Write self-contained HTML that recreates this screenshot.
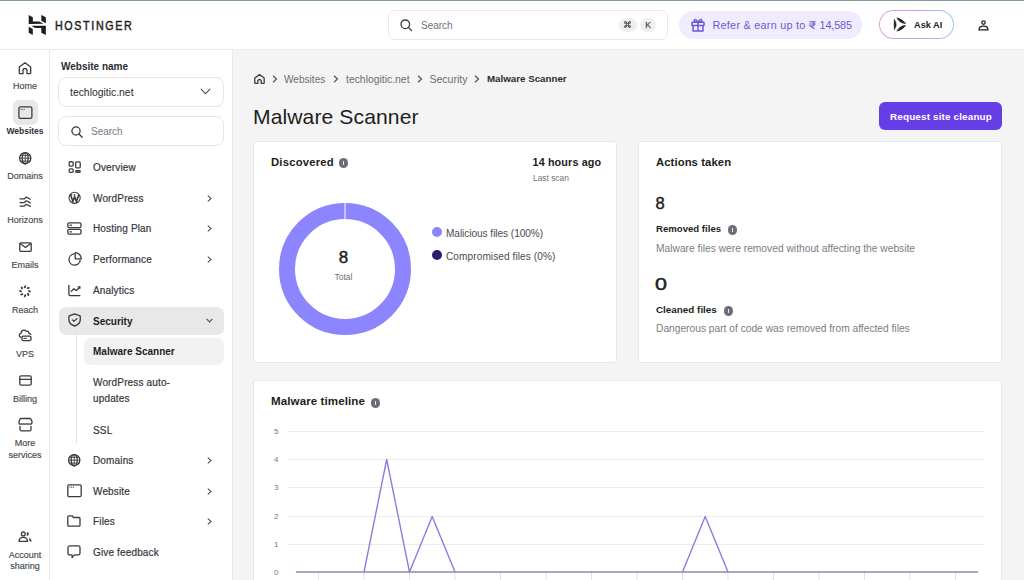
<!DOCTYPE html>
<html><head><meta charset="utf-8">
<style>
*{box-sizing:border-box;margin:0;padding:0}
html,body{width:1024px;height:580px;overflow:hidden;background:#fff}
body{position:relative;font-family:"Liberation Sans",sans-serif;color:#1d1e20}
.a{position:absolute;white-space:nowrap}
svg{position:absolute;overflow:visible}
.topline{left:0;top:0;width:1024px;height:1px;background:#839d9b}
.hdrb{left:0;top:49px;width:1024px;height:1px;background:#ebebeb}
.nav{left:0;top:50px;width:50px;height:530px;background:#fff;border-right:1px solid #e9e9e9}
.side{left:51px;top:50px;width:182px;height:530px;background:#fff;border-right:1px solid #e9e9e9}
.main{left:233px;top:50px;width:791px;height:530px;background:#f4f4f4}
.navl{font-size:9px;color:#46474c;text-align:center;width:50px;left:0;-webkit-text-stroke:0.15px #46474c}
.card{background:#fff;border:1px solid #e8e8e8;border-radius:3px}
.mi{font-size:10px;color:#36373d;left:93px;-webkit-text-stroke:0.2px #36373d;letter-spacing:0.15px}
.chev{stroke:#555;stroke-width:1.2;fill:none}
.ic{stroke:#3a3b40;stroke-width:1.3;fill:none;stroke-linecap:round;stroke-linejoin:round}
.info{width:9.4px;height:9.4px;border-radius:50%;background:#6e6e7b;margin-top:0.4px}
.info:after{content:"";position:absolute;left:4.15px;top:4px;width:1.1px;height:3px;background:#e8e8ee}
.info:before{content:"";position:absolute;left:4.15px;top:2.3px;width:1.1px;height:1.1px;background:#e8e8ee}
</style></head><body>
<div class="a topline"></div>

<!-- header -->
<svg style="left:26px;top:13px" width="22" height="24" viewBox="0 0 22 24"><g fill="#1d1e20">
<path d="M2.69 2.07 L6.82 4.14 V8.6 H13.4 L17.6 10.8 L2.69 10.9 Z"/>
<path d="M15.3 2.07 L19.85 4.34 V10.13 L15.3 7.86 Z"/>
<path d="M5.2 12.75 H19.85 V21.92 L15.3 19.64 V15 H9.2 Z"/>
<path d="M2.69 13.85 L6.82 15.92 V21.92 L2.69 19.64 Z"/>
</g></svg>
<div class="a" style="left:54.5px;top:19px;font-size:12.2px;font-weight:400;-webkit-text-stroke:0.45px #1d1e20;letter-spacing:1.85px;color:#1d1e20;transform:scaleX(0.88);transform-origin:0 0">HOSTINGER</div>
<div class="a hdrb"></div>

<div class="a" style="left:388px;top:10px;width:280px;height:30px;border:1px solid #e9e9e9;border-radius:7px;background:#fff"></div>
<svg style="left:400px;top:19px" width="13" height="13" viewBox="0 0 13 13"><circle cx="5.3" cy="5.3" r="4.3" class="ic" stroke="#3d3d3d" stroke-width="1.4"/><path d="M8.5 8.5 L11.6 11.6" class="ic" stroke-width="1.4"/></svg>
<div class="a" style="left:421px;top:20px;font-size:10px;color:#6f7076">Search</div>
<div class="a" style="left:619px;top:18px;width:18px;height:14px;border-radius:7px;background:#efefef"></div>
<svg style="left:624.3px;top:21px" width="7" height="7" viewBox="0 0 8 8"><g fill="none" stroke="#505050" stroke-width="1.15"><path d="M2.7 2.7 H5.3 V5.3 H2.7 Z"/><path d="M2.7 2.7 V1.7 A1.05 1.05 0 1 0 1.7 2.7 H2.7 M5.3 2.7 V1.7 A1.05 1.05 0 1 1 6.3 2.7 H5.3 M2.7 5.3 V6.3 A1.05 1.05 0 1 1 1.7 5.3 H2.7 M5.3 5.3 V6.3 A1.05 1.05 0 1 0 6.3 5.3 H5.3"/></g></svg>
<div class="a" style="left:640px;top:18px;width:16px;height:14px;border-radius:7px;background:#efefef;font-size:8.5px;color:#4a4a4a;-webkit-text-stroke:0.25px #4a4a4a;text-align:center;line-height:14px">K</div>

<div class="a" style="left:679px;top:11px;width:183px;height:28px;border-radius:14px;background:#efecfd"></div>
<svg style="left:691px;top:18px" width="14" height="14" viewBox="0 0 14 14"><g fill="none" stroke="#6c55d9" stroke-width="1.5" stroke-linejoin="round"><rect x="1" y="4.3" width="12" height="3.2" rx=".6"/><path d="M2 7.5 V13 H12 V7.5 M7 4.3 V13"/><path d="M7 4.3 C5.5 1 3 1 3.2 2.8 C3.4 4 5.5 4.3 7 4.3 C8.5 4.3 10.6 4 10.8 2.8 C11 1 8.5 1 7 4.3"/></g></svg>
<div class="a" style="left:712.5px;top:18.5px;font-size:10.8px;letter-spacing:0.27px;color:#6b5bd2">Refer &amp; earn up to</div>
<svg style="left:809px;top:21px" width="7" height="8" viewBox="0 0 7 8"><path d="M0.3 0.8 H6.6 M0.3 3 H6.6 M1.2 0.8 H2.6 C4.4 0.8 5.3 1.8 5.3 3 C5.3 4.2 4.4 5.1 2.6 5.1 H1.2 L5.6 7.8" fill="none" stroke="#6b5bd2" stroke-width="1.05"/></svg>
<div class="a" style="left:819.5px;top:18.5px;font-size:10.8px;letter-spacing:-0.1px;color:#6b5bd2">14,585</div>

<div class="a" style="left:879px;top:10px;width:75px;height:29px;border-radius:15px;background:linear-gradient(90deg,#e2a3dd,#b3a5ec 50%,#9ccbea)"></div>
<div class="a" style="left:880px;top:11px;width:73px;height:27px;border-radius:14px;background:#fff"></div>
<svg style="left:893px;top:17px" width="14" height="15" viewBox="0 0 14 15"><g fill="#1d1e20" stroke="#1d1e20" stroke-width="0.5" stroke-linejoin="round"><path d="M1.3 2.2 Q5 7.5 1.3 12.8 Q0.9 7.5 1.3 2.2 Z"/><path d="M3.8 0.8 Q9.2 2 12.8 6.5 Q7 6.8 3.8 0.8 Z"/><path d="M3.8 14.2 Q9.2 13 12.8 8.5 Q7 8.2 3.8 14.2 Z"/></g></svg>
<div class="a" style="left:914px;top:19.5px;font-size:9.2px;font-weight:700;color:#1d1e20">Ask AI</div>
<svg style="left:978px;top:20px" width="11" height="11" viewBox="0 0 11 11"><g fill="none" stroke="#1d1e20" stroke-width="1.25"><circle cx="5.5" cy="2.6" r="1.75"/><path d="M1 9.9 H10 C10 7.4 8 6.1 5.5 6.1 C3 6.1 1 7.4 1 9.9 Z"/></g></svg>

<!-- left nav -->
<div class="a nav"></div>
<svg style="left:18px;top:62px" width="14" height="13" viewBox="0 0 14 13"><path class="ic" stroke-width="1.15" d="M1.3 4.9 L7 0.7 L12.7 4.9 V11 C12.7 11.4 12.4 11.7 12 11.7 H9 V8.4 C9 7.3 8.1 6.5 7 6.5 C5.9 6.5 5 7.3 5 8.4 V11.7 H2 C1.6 11.7 1.3 11.4 1.3 11 Z"/></svg>
<div class="a navl" style="top:81px">Home</div>
<div class="a" style="left:13px;top:100px;width:25px;height:25px;border-radius:6px;background:#e8e8e8"></div>
<svg style="left:18px;top:106px" width="15" height="14" viewBox="0 0 15 14"><rect x="0.9" y="0.9" width="13" height="11.5" rx="1.5" class="ic" stroke-width="1.5"/><g fill="#3a3b40"><circle cx="3" cy="3.2" r=".55"/><circle cx="4.6" cy="3.2" r=".55"/><circle cx="6.2" cy="3.2" r=".55"/></g></svg>
<div class="a navl" style="top:125.5px;font-weight:700;color:#2f3035;font-size:8.5px;-webkit-text-stroke:0">Websites</div>
<svg style="left:19px;top:152px" width="13" height="13" viewBox="0 0 13 13"><g class="ic" stroke-width="1.15"><circle cx="6.2" cy="6.2" r="5.6"/><ellipse cx="6.2" cy="6.2" rx="3" ry="5.6"/><path d="M0.6 6.2 H11.8 M6.2 0.6 V11.8 M1.5 3.3 H10.9 M1.5 9.1 H10.9" stroke-width="0.9"/></g></svg>
<div class="a navl" style="top:170.5px">Domains</div>
<svg style="left:19px;top:195px" width="13" height="13" viewBox="0 0 13 13"><g class="ic" stroke-width="1.5" stroke-linecap="butt"><path d="M1 3.9 H5.3 L7.4 2.1 L11.3 4.2"/><path d="M1 7.6 H5.3 L7.4 5.8 L11.3 7.9"/><path d="M1 11.1 H5.3 L7.4 9.3 L11.3 11.4"/></g></svg>
<div class="a navl" style="top:215px">Horizons</div>
<svg style="left:19px;top:242px" width="13" height="10" viewBox="0 0 13 10"><g class="ic" stroke-width="1.3"><rect x="0.8" y="0.8" width="11.4" height="8.6" rx="1.2"/><path d="M1.2 1.5 L6.5 5.5 L11.8 1.5"/></g></svg>
<div class="a navl" style="top:260px">Emails</div>
<svg style="left:19px;top:285px" width="13" height="13" viewBox="0 0 13 13"><g fill="#3a3b40"><ellipse cx="6.00" cy="1.70" rx="1.0" ry="1.6" transform="rotate(35 6.00 1.70)"/><ellipse cx="9.18" cy="3.02" rx="1.0" ry="1.6" transform="rotate(80 9.18 3.02)"/><ellipse cx="10.50" cy="6.20" rx="1.0" ry="1.6" transform="rotate(125 10.50 6.20)"/><ellipse cx="9.18" cy="9.38" rx="1.0" ry="1.6" transform="rotate(170 9.18 9.38)"/><ellipse cx="6.00" cy="10.70" rx="1.0" ry="1.6" transform="rotate(215 6.00 10.70)"/><ellipse cx="2.82" cy="9.38" rx="1.0" ry="1.6" transform="rotate(260 2.82 9.38)"/><ellipse cx="1.50" cy="6.20" rx="1.0" ry="1.6" transform="rotate(305 1.50 6.20)"/><ellipse cx="2.82" cy="3.02" rx="1.0" ry="1.6" transform="rotate(350 2.82 3.02)"/></g></svg>
<div class="a navl" style="top:304.5px">Reach</div>
<svg style="left:18px;top:329px" width="14" height="13" viewBox="0 0 14 13"><g class="ic" stroke-width="1.2"><path d="M2.8 8.2 C1.4 7.6 1 6.4 1.6 5.3 C2 4.7 2.6 4.4 3 4.4 C3 2.4 4.6 1.2 6 1.2 C7 1.2 7.8 1.7 8.3 2.4 C9 2.1 10 2.3 10.5 3 C10.8 3.4 11 3.9 11 4.3 C11.8 4.5 12.5 5 12.8 5.4"/><rect x="3.9" y="7.2" width="9.1" height="4.4" rx="1.4"/></g><rect x="5.5" y="8.9" width="3" height="1.1" fill="#3a3b40"/></svg>
<div class="a navl" style="top:349px">VPS</div>
<svg style="left:19px;top:375px" width="13" height="11" viewBox="0 0 13 11"><g class="ic" stroke-width="1.2"><rect x="0.8" y="0.8" width="11.4" height="9.4" rx="1.4"/><path d="M0.8 4.4 H12.2"/></g></svg>
<div class="a navl" style="top:394px">Billing</div>
<svg style="left:18px;top:417px" width="15" height="15" viewBox="0 0 15 15"><g class="ic" stroke-width="1.25"><path d="M3 1.5 H12 C12.4 1.5 12.7 1.7 12.9 2 L14 4.6 C14.1 4.9 14.1 5.2 14 5.6 L13.6 6.8 C12.8 7.3 11.8 7.3 11 6.8 C10.2 7.3 9.2 7.3 8.4 6.8 C7.6 7.3 6.6 7.3 5.8 6.8 C5 7.3 4 7.3 3.2 6.8 C2.4 7.3 1.6 7.2 1.2 6.8 L1 5.6 C0.9 5.2 0.9 4.9 1 4.6 L2.1 2 C2.3 1.7 2.6 1.5 3 1.5 Z"/><path d="M2 9.5 V12.2 C2 13.2 2.6 13.8 3.6 13.8 H11.4 C12.4 13.8 13 13.2 13 12.2 V9.5"/></g></svg>
<div class="a navl" style="top:437px;line-height:12.4px;white-space:normal">More<br>services</div>
<svg style="left:18px;top:531px" width="15" height="12" viewBox="0 0 15 12"><g class="ic" stroke-width="1.4"><circle cx="5.3" cy="2.9" r="1.9"/><path d="M1 10.4 H9.6 C9.4 7.8 7.6 6.4 5.3 6.4 C3 6.4 1.2 7.8 1 10.4 Z"/></g><path d="M8.8 0.9 A2 2 0 0 1 8.8 4.9 Z" fill="#3a3b40"/><path d="M10.6 6.6 C12.6 7.4 13.6 8.8 13.6 10.6 H11.6 C11.6 9 11.2 7.6 10.6 6.6 Z" fill="#3a3b40"/></svg>
<div class="a navl" style="top:550px;line-height:11.2px;white-space:normal">Account<br>sharing</div>

<!-- side panel -->
<div class="a side"></div>
<div class="a" style="left:61px;top:61px;font-size:10px;font-weight:700;color:#2b2c31">Website name</div>
<div class="a" style="left:58px;top:77px;width:166px;height:30px;border:1px solid #e6e6e6;border-radius:8px"></div>
<div class="a" style="left:70px;top:86.7px;font-size:10.4px;color:#2b2c31">techlogitic.net</div>
<svg style="left:200px;top:88px" width="11" height="7" viewBox="0 0 11 7"><path d="M0.8 0.8 L5.5 5.6 L10.2 0.8" class="chev" stroke="#3a3b40" stroke-width="1.3"/></svg>
<div class="a" style="left:58px;top:116px;width:166px;height:30px;border:1px solid #e6e6e6;border-radius:8px"></div>
<svg style="left:71px;top:126px" width="12" height="12" viewBox="0 0 12 12"><circle cx="5" cy="5" r="4.1" class="ic" stroke="#555" stroke-width="1.3"/><path d="M8 8 L11.2 11.2" class="ic" stroke="#555" stroke-width="1.3"/></svg>
<div class="a" style="left:91px;top:126px;font-size:10px;color:#77787f">Search</div>

<!-- menu -->
<svg style="left:68px;top:161px" width="14" height="13" viewBox="0 0 14 13"><g class="ic" stroke-width="1.3"><rect x="1.15" y="0.75" width="4" height="4.4" rx="1.1"/><rect x="7.65" y="0.95" width="4.6" height="6" rx="1.2"/><rect x="1.15" y="7.85" width="4" height="3.5" rx="1"/><rect x="7.65" y="9.75" width="4.6" height="1.6" rx=".8"/></g></svg>
<div class="a mi" style="top:162px">Overview</div>
<svg style="left:68px;top:191px" width="14" height="14" viewBox="0 0 14 14"><circle cx="6.6" cy="6.8" r="5.6" fill="none" stroke="#3a3b40" stroke-width="1.1"/><path d="M2.6 3.8 L4.9 10.6 L6.6 5.6 L8.4 10.6 L10.8 3.8" fill="none" stroke="#3a3b40" stroke-width="1.6" stroke-linejoin="miter"/><path d="M2 3.8 H4.3 M5.5 3.8 H7.4" stroke="#3a3b40" stroke-width="0.9"/></svg>
<div class="a mi" style="top:193px">WordPress</div>
<svg style="left:207px;top:195px" width="5" height="7" viewBox="0 0 5 7"><path d="M0.8 0.6 L4 3.5 L0.8 6.4" class="chev"/></svg>
<svg style="left:67px;top:222px" width="15" height="13" viewBox="0 0 15 13"><g class="ic" stroke-width="1.3"><rect x="0.8" y="0.8" width="13.2" height="4.8" rx="1.4"/><rect x="0.8" y="7.4" width="13.2" height="4.8" rx="1.4"/><path d="M3 3.2 H4.5 M3 9.8 H4.5"/></g></svg>
<div class="a mi" style="top:223px">Hosting Plan</div>
<svg style="left:207px;top:225px" width="5" height="7" viewBox="0 0 5 7"><path d="M0.8 0.6 L4 3.5 L0.8 6.4" class="chev"/></svg>
<svg style="left:68px;top:252px" width="14" height="14" viewBox="0 0 14 14"><g class="ic" stroke-width="1.25"><path d="M6 1.9 A5.6 5.6 0 1 0 12.2 8.1"/><path d="M7.2 0.7 V6.8 H13.3 A6.1 6.1 0 0 0 7.2 0.7 Z"/></g></svg>
<div class="a mi" style="top:254px">Performance</div>
<svg style="left:207px;top:256px" width="5" height="7" viewBox="0 0 5 7"><path d="M0.8 0.6 L4 3.5 L0.8 6.4" class="chev"/></svg>
<svg style="left:68px;top:284px" width="14" height="13" viewBox="0 0 14 13"><g class="ic" stroke-width="1.35"><path d="M0.9 1.3 V10.2 C0.9 11 1.4 11.6 2.2 11.6 H11.9"/><path d="M3.2 7.4 L5.9 4.7 L8.1 6.6 L10.6 4.2"/></g><path d="M9.2 2.5 L12.6 2 L12.2 5.4 Z" fill="#3a3b40"/></svg>
<div class="a mi" style="top:285px">Analytics</div>
<div class="a" style="left:59px;top:307px;width:165px;height:28px;border-radius:7px;background:#e8e8e8"></div>
<svg style="left:68px;top:313px" width="14" height="14" viewBox="0 0 14 14"><g class="ic" stroke="#1d1e20" stroke-width="1.55"><path d="M6.6 0.9 L12 2.9 C12.2 3 12.3 3.2 12.3 3.4 V6.6 C12.3 9.6 10.2 12 6.6 13 C3 12 0.9 9.6 0.9 6.6 V3.4 C0.9 3.2 1 3 1.2 2.9 Z"/><path d="M4.4 6.9 L6 8.4 L8.9 5.6"/></g></svg>
<div class="a mi" style="top:316px;font-weight:700;color:#1d1e20;-webkit-text-stroke:0;letter-spacing:0">Security</div>
<svg style="left:206px;top:318px" width="7" height="5" viewBox="0 0 7 5"><path d="M0.6 0.8 L3.5 3.8 L6.4 0.8" class="chev"/></svg>
<div class="a" style="left:76px;top:335px;width:1px;height:109px;background:#e3e3e3"></div>
<div class="a" style="left:84px;top:338px;width:140px;height:27px;border-radius:7px;background:#f2f2f2"></div>
<div class="a mi" style="top:346px;left:93px;font-weight:700;color:#1d1e20;-webkit-text-stroke:0;letter-spacing:0">Malware Scanner</div>
<div class="a mi" style="top:375px;left:93px;line-height:16.3px;white-space:normal">WordPress auto-<br>updates</div>
<div class="a mi" style="top:425px;left:93px">SSL</div>
<svg style="left:68px;top:454px" width="13" height="13" viewBox="0 0 13 13"><g class="ic" stroke-width="1.15"><circle cx="6.2" cy="6.2" r="5.6"/><ellipse cx="6.2" cy="6.2" rx="3" ry="5.6"/><path d="M0.6 6.2 H11.8 M6.2 0.6 V11.8 M1.5 3.3 H10.9 M1.5 9.1 H10.9" stroke-width="0.9"/></g></svg>
<div class="a mi" style="top:455px">Domains</div>
<svg style="left:207px;top:457px" width="5" height="7" viewBox="0 0 5 7"><path d="M0.8 0.6 L4 3.5 L0.8 6.4" class="chev"/></svg>
<svg style="left:67px;top:484px" width="15" height="14" viewBox="0 0 15 14"><rect x="0.8" y="0.8" width="13.4" height="11.8" rx="1.3" class="ic" stroke-width="1.2"/><g fill="#3a3b40"><circle cx="3" cy="3.1" r=".65"/><circle cx="4.7" cy="3.1" r=".65"/><circle cx="6.4" cy="3.1" r=".65"/></g></svg>
<div class="a mi" style="top:486px">Website</div>
<svg style="left:207px;top:488px" width="5" height="7" viewBox="0 0 5 7"><path d="M0.8 0.6 L4 3.5 L0.8 6.4" class="chev"/></svg>
<svg style="left:67px;top:515px" width="14" height="12" viewBox="0 0 14 12"><path class="ic" stroke-width="1.2" d="M0.8 1.8 C0.8 1.2 1.2 0.8 1.8 0.8 H5 L6.5 2.5 H12 C12.6 2.5 13 2.9 13 3.5 V10.2 C13 10.8 12.6 11.2 12 11.2 H1.8 C1.2 11.2 0.8 10.8 0.8 10.2 Z"/></svg>
<div class="a mi" style="top:516px">Files</div>
<svg style="left:207px;top:518px" width="5" height="7" viewBox="0 0 5 7"><path d="M0.8 0.6 L4 3.5 L0.8 6.4" class="chev"/></svg>
<svg style="left:67px;top:545px" width="14" height="14" viewBox="0 0 14 14"><path class="ic" stroke-width="1.2" d="M1 2.6 C1 1.6 1.7 0.9 2.7 0.9 H11.3 C12.3 0.9 13 1.6 13 2.6 V8.2 C13 9.2 12.3 9.9 11.3 9.9 H7.6 L5.1 12.6 V9.9 H2.7 C1.7 9.9 1 9.2 1 8.2 Z"/></svg>
<div class="a mi" style="top:547px">Give feedback</div>

<!-- main -->
<div class="a main"></div>
<svg style="left:254px;top:74px" width="11" height="10" viewBox="0 0 11 10"><path class="ic" stroke="#555" stroke-width="1.2" d="M0.8 4 L5.5 0.6 L10.2 4 V9 C10.2 9.3 10 9.4 9.8 9.4 H7.2 V7 C7.2 6.1 6.5 5.5 5.5 5.5 C4.5 5.5 3.8 6.1 3.8 7 V9.4 H1.2 C1 9.4 0.8 9.3 0.8 9 Z"/></svg>
<svg style="left:272px;top:75px" width="6" height="8" viewBox="0 0 6 8"><path d="M1 0.8 L4.5 4 L1 7.2" class="chev" stroke="#555" stroke-width="1.2"/></svg>
<div class="a" style="left:284px;top:73.5px;font-size:10.1px;color:#6b6c73">Websites</div>
<svg style="left:333px;top:75px" width="6" height="8" viewBox="0 0 6 8"><path d="M1 0.8 L4.5 4 L1 7.2" class="chev" stroke="#555" stroke-width="1.2"/></svg>
<div class="a" style="left:346px;top:73.5px;font-size:10.4px;color:#6b6c73">techlogitic.net</div>
<svg style="left:417px;top:75px" width="6" height="8" viewBox="0 0 6 8"><path d="M1 0.8 L4.5 4 L1 7.2" class="chev" stroke="#555" stroke-width="1.2"/></svg>
<div class="a" style="left:429.5px;top:73px;font-size:10.5px;color:#6b6c73">Security</div>
<svg style="left:474px;top:75px" width="6" height="8" viewBox="0 0 6 8"><path d="M1 0.8 L4.5 4 L1 7.2" class="chev" stroke="#555" stroke-width="1.2"/></svg>
<div class="a" style="left:487px;top:73px;font-size:9.75px;font-weight:700;color:#2b2c31">Malware Scanner</div>

<div class="a" style="left:253px;top:104.5px;font-size:21.1px;letter-spacing:0.1px;color:#1d1e20">Malware Scanner</div>
<div class="a" style="left:879px;top:102px;width:123px;height:28px;border-radius:6px;background:#673de6"></div>
<div class="a" style="left:890px;top:110.5px;font-size:9.9px;letter-spacing:0.16px;font-weight:700;color:#fff">Request site cleanup</div>

<!-- card 1 -->
<div class="a card" style="left:253px;top:141px;width:364px;height:222px"></div>
<div class="a" style="left:271px;top:156px;font-size:11.3px;letter-spacing:0.2px;font-weight:700;color:#1d1e20">Discovered</div>
<div class="a info" style="left:339px;top:158px"></div>
<div class="a" style="left:532.5px;top:156px;font-size:10.8px;letter-spacing:0.13px;font-weight:700;color:#1d1e20">14 hours ago</div>
<div class="a" style="left:533px;top:173px;font-size:8.4px;color:#6f7078">Last scan</div>
<svg style="left:278.5px;top:202.5px" width="132" height="132" viewBox="0 0 132 132"><circle cx="66" cy="66" r="58" fill="none" stroke="#8c85ff" stroke-width="16"/><path d="M66 0 V16" stroke="#fff" stroke-width="1"/></svg>
<div class="a" style="left:321.5px;top:247.5px;width:44px;text-align:center;font-size:17px;-webkit-text-stroke:0.45px #1d1e20;color:#1d1e20">8</div>
<div class="a" style="left:321.5px;top:271.5px;width:44px;text-align:center;font-size:8.5px;color:#6f7078">Total</div>
<div class="a" style="left:432px;top:227px;width:10px;height:10px;border-radius:50%;background:#8c85ff"></div>
<div class="a" style="left:446px;top:227.5px;font-size:10.1px;letter-spacing:-0.05px;color:#4a4b52">Malicious files (100%)</div>
<div class="a" style="left:432px;top:250px;width:10px;height:10px;border-radius:50%;background:#2f1c6a"></div>
<div class="a" style="left:446px;top:250.5px;font-size:10.1px;letter-spacing:0.08px;color:#4a4b52">Compromised files (0%)</div>

<!-- card 2 -->
<div class="a card" style="left:638px;top:141px;width:364px;height:222px"></div>
<div class="a" style="left:656px;top:156px;font-size:11.3px;letter-spacing:0.08px;font-weight:700;color:#1d1e20">Actions taken</div>
<div class="a" style="left:655.5px;top:193.5px;font-size:16.5px;-webkit-text-stroke:0.45px #1d1e20;color:#1d1e20">8</div>
<div class="a" style="left:656px;top:223px;font-size:9.6px;font-weight:700;color:#1d1e20">Removed files</div>
<div class="a info" style="left:728px;top:225px"></div>
<div class="a" style="left:656px;top:243px;font-size:10.25px;color:#7b7c83">Malware files were removed without affecting the website</div>
<div class="a" style="left:654.5px;top:274.5px;font-size:16.5px;-webkit-text-stroke:0.45px #1d1e20;color:#1d1e20;transform:scaleX(1.3);transform-origin:0 0">0</div>
<div class="a" style="left:656px;top:304px;font-size:9.87px;font-weight:700;color:#1d1e20">Cleaned files</div>
<div class="a info" style="left:724px;top:306px"></div>
<div class="a" style="left:656px;top:323px;font-size:10.23px;color:#7b7c83">Dangerous part of code was removed from affected files</div>

<!-- card 3 -->
<div class="a card" style="left:253px;top:380px;width:749px;height:220px"></div>
<div class="a" style="left:271px;top:394px;font-size:11.6px;letter-spacing:0.08px;font-weight:700;color:#1d1e20">Malware timeline</div>
<div class="a info" style="left:371px;top:398px"></div>
<div id="chart"></div>
<svg style="left:0;top:0" width="1024" height="580">
<g stroke="#ececec" stroke-width="1">
<path d="M289 431.5 H984 M289 459.5 H984 M289 487.5 H984 M289 516.5 H984 M289 544.5 H984"/>
</g>
<g stroke="#e2e2e2" stroke-width="1">
<path d="M318.5 572 V580 M364 572 V580 M409.5 572 V580 M455 572 V580 M500.5 572 V580 M546 572 V580 M591.5 572 V580 M637 572 V580 M682.5 572 V580 M728 572 V580 M773.5 572 V580 M819 572 V580 M864.5 572 V580 M910 572 V580 M955.5 572 V580"/>
</g>
<path d="M296 572 H978" stroke="#8b88b5" stroke-width="1.6"/>
<polyline fill="none" stroke="#8680e0" stroke-width="1.4" stroke-linejoin="round" points="364,572 386.7,459.5 409.5,572 432.2,516.5 455,572"/>
<polyline fill="none" stroke="#8680e0" stroke-width="1.4" stroke-linejoin="round" points="682.5,572 705.2,516.5 728,572"/>
</svg>
<div class="a" style="left:274px;top:428px;font-size:8px;color:#77787f;line-height:8px">5</div>
<div class="a" style="left:274px;top:456px;font-size:8px;color:#77787f;line-height:8px">4</div>
<div class="a" style="left:274px;top:484px;font-size:8px;color:#77787f;line-height:8px">3</div>
<div class="a" style="left:274px;top:513px;font-size:8px;color:#77787f;line-height:8px">2</div>
<div class="a" style="left:274px;top:541px;font-size:8px;color:#77787f;line-height:8px">1</div>
<div class="a" style="left:274px;top:569px;font-size:8px;color:#77787f;line-height:8px">0</div>
</body></html>
